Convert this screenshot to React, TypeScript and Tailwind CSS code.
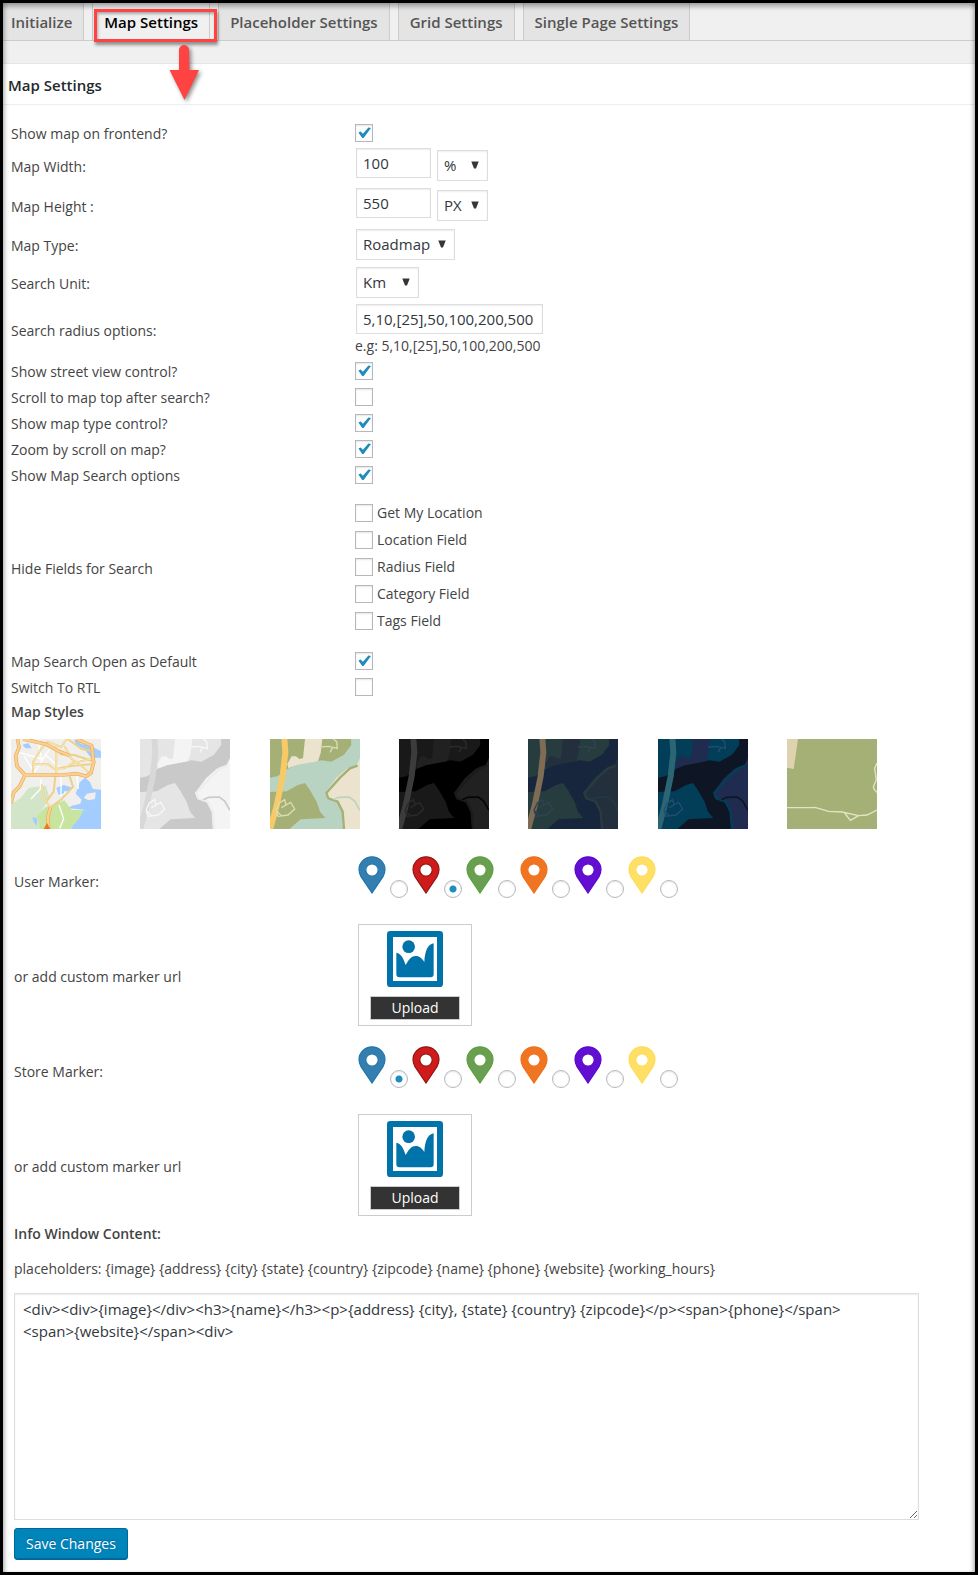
import type { ReactNode } from "react";

type Option = { id: string; label: string; checked?: boolean };

const toggles: Option[] = [
  { id: "street-view", label: "Show street view control?", checked: true },
  { id: "scroll-top", label: "Scroll to map top after search?" },
  { id: "type-control", label: "Show map type control?", checked: true },
  { id: "zoom-scroll", label: "Zoom by scroll on map?", checked: true },
  { id: "search-options", label: "Show Map Search options", checked: true },
];

const hiddenFields: Option[] = [
  { id: "hide-location", label: "Get My Location" },
  { id: "hide-address", label: "Location Field" },
  { id: "hide-radius", label: "Radius Field" },
  { id: "hide-category", label: "Category Field" },
  { id: "hide-tags", label: "Tags Field" },
];

const displayToggles: Option[] = [
  { id: "search-open", label: "Map Search Open as Default", checked: true },
  { id: "rtl", label: "Switch To RTL" },
];

const markers = [
  { name: "Blue", fill: "#347fb0", edge: "#1f77ad" },
  { name: "Red", fill: "#cf1b1b", edge: "#941414" },
  { name: "Green", fill: "#6a9f53", edge: "#5ba23c" },
  { name: "Orange", fill: "#f07522", edge: "#f0701a" },
  { name: "Purple", fill: "#620fd2", edge: "#5a08cf" },
  { name: "Yellow", fill: "#ffe067", edge: "#ffdc55" },
];

const infoTemplate =
  "<div><div>{image}</div><h3>{name}</h3><p>{address} {city}, {state} {country} {zipcode}</p><span>{phone}</span>\n<span>{website}</span><div>";

function Checkbox({ id, checked }: { id: string; checked?: boolean }) {
  return (
    <span className="relative block size-[18px] shrink-0">
      <input
        id={id}
        type="checkbox"
        defaultChecked={checked}
        className="peer block size-[18px] appearance-none border border-[#b4b9be] bg-white shadow-[inset_0_1px_2px_rgba(0,0,0,0.1)]"
      />
      <svg
        viewBox="0 0 18 18"
        className="pointer-events-none absolute inset-0 hidden size-[18px] peer-checked:block"
        aria-hidden="true"
      >
        <path d="M3.4 8.6 5.8 7.4 7.9 9.8 13.4 3.4 16 4 8.6 14 7.2 14Z" fill="#1e8cbe" />
      </svg>
    </span>
  );
}

type RowProps = { label: string; htmlFor?: string; className: string; cell?: string; children: ReactNode };

function Row({ label, htmlFor, className, cell = "pb-0.5", children }: RowProps) {
  return (
    <div className={`grid grid-cols-[344px_1fr] items-center ${className}`}>
      {htmlFor ? <label htmlFor={htmlFor}>{label}</label> : <span>{label}</span>}
      <div className={cell}>{children}</div>
    </div>
  );
}

function Select({ id, label, options, className }: { id: string; label: string; options: string[]; className: string }) {
  return (
    <span className={`relative block h-[31px] ${className}`}>
      <select
        id={id}
        aria-label={label}
        className="block h-full w-full appearance-none border border-[#ddd] bg-white pr-5 pl-1.5 text-[15px] text-[#32373c] shadow-[inset_0_1px_2px_rgba(0,0,0,0.07)]"
      >
        {options.map((option) => (
          <option key={option}>{option}</option>
        ))}
      </select>
      <svg viewBox="0 0 8 8" className="pointer-events-none absolute top-[11px] right-[9px] size-2" aria-hidden="true">
        <path d="M0.3 0.5H7.7L5 7.5H3Z" fill="#32373c" />
      </svg>
    </span>
  );
}

const textInput =
  "block h-[30px] border border-[#ddd] bg-white px-1.5 text-[15px] text-[#32373c] shadow-[inset_0_1px_2px_rgba(0,0,0,0.07)]";

type Palette = { water: string; land: string; light: string; road: string; edge: string; trail: string; stream: string };

const riverStyles: { name: string; palette: Palette }[] = [
  { name: "Silver", palette: { water: "#c9c9c9", land: "#e5e5e5", light: "#f4f4f4", road: "#d8d8d8", edge: "#eeeeee", trail: "#f7f7f7", stream: "#c9c9c9" } },
  { name: "Retro", palette: { water: "#b9d3c2", land: "#a5b076", light: "#ebe3cd", road: "#f8c967", edge: "#a5b076", trail: "#dcdcae", stream: "#b9d3c2" } },
  { name: "Dark", palette: { water: "#000000", land: "#191919", light: "#212121", road: "#3c3c3c", edge: "#1b1b1b", trail: "#2b2b2b", stream: "#050505" } },
  { name: "Night", palette: { water: "#17263c", land: "#263c3f", light: "#242f3e", road: "#7f6c54", edge: "#263c3f", trail: "#2f4450", stream: "#213a42" } },
  { name: "Aubergine", palette: { water: "#0e1626", land: "#023e58", light: "#1f2c50", road: "#2c6675", edge: "#023e58", trail: "#234d72", stream: "#0e1626" } },
];

function RiverMap({ palette }: { palette: Palette }) {
  return (
    <svg viewBox="0 0 270 270" className="block size-[90px]" aria-hidden="true">
      <rect width="270" height="270" fill={palette.water} />
      <path d="M0 0H243L244 18 222 47 184 68 155 64 82 78 52 90 22 112 0 116Z" fill={palette.land} />
      <path d="M105 0H157L152 42 144 67 82 78 55 88 52 75 65 52 78 52 88 60 99 58Z" fill={palette.light} />
      <path d="M0 159 50 157 84 138 105 132 120 154 140 188 150 218 166 237 92 241 58 270H0Z" fill={palette.land} />
      <path d="M270 56 258 82 230 89 198 118 165 162 172 178 203 190 216 216 219 270H270Z" fill={palette.light} />
      <path d="M263 80 240 88 210 116 169 162 175 178 203 188 218 218 222 270" fill="none" stroke={palette.edge} strokeWidth="7" />
      <path d="M190 182 206 175 238 174 254 186 270 214" fill="none" stroke={palette.stream} strokeWidth="5" />
      <path d="M43 -4 46 40 38 112 20 200 0 272" fill="none" stroke={palette.road} strokeWidth="18" />
      <g fill="none" stroke={palette.trail} strokeWidth="4">
        <path d="M18 214 28 192 44 182 48 198 34 206M48 198 62 190 74 210 54 228 24 232 18 214 34 230" />
        <path d="M150 24 176 22 202 28 200 8 190 0M188 26 180 40" />
      </g>
    </svg>
  );
}

function CityMap() {
  return (
    <svg viewBox="0 0 270 270" className="block size-[90px]" aria-hidden="true">
      <rect width="270" height="270" fill="#f0efec" />
      <path d="M0 196 28 178 54 146 104 140 116 176 88 222 102 270H0Z" fill="#d2e5c9" />
      <path d="M78 232 104 204 132 196 160 184 182 212 218 214 214 240 176 270H88Z" fill="#c8e5a0" />
      <path d="M270 152 246 150 236 128 222 116 206 130 194 164 212 182 208 194 182 200 174 208 218 212 206 236 178 270H270Z" fill="#a3ccff" />
      <path d="M136 146 158 138 184 146 176 158 160 156 158 172 142 166Z" fill="#a3ccff" />
      <path d="M188 0 210 14 240 22 270 36V56H240L220 30 196 18Z" fill="#a3ccff" />
      <path d="M34 18 52 12 62 28 44 28ZM64 234 78 238 78 262 68 248Z" fill="#a3ccff" />
      <path d="M218 176 228 164 254 160 252 180 232 184Z" fill="#f0efec" />
      <g fill="none" stroke="#ffffff" strokeWidth="4">
        <path d="M24 40 92 60 80 0M40 52 70 100 116 30M90 120 88 150 60 180M150 108 150 170 186 150M196 96 202 150M144 198 158 240 146 268M100 44 150 90 214 60" />
      </g>
      <g fill="none" stroke="#edd08a" strokeWidth="6">
        <path d="M66 104V70L90 30 110 8 150 24 168 0M66 76H112L130 90 160 88 186 72 240 60M136 20V104M92 136 100 178 118 206M160 20 182 60 218 86 236 104M134 104 128 158 106 188M176 112 186 144 150 182 118 206M146 46 190 48 244 66M134 90 184 80 240 76M170 0 212 30 244 36" />
      </g>
      <g fill="none" stroke="#fff0b8" strokeWidth="2">
        <path d="M66 104V70L90 30 110 8 150 24 168 0M66 76H112L130 90 160 88 186 72 240 60M136 20V104M92 136 100 178 118 206M160 20 182 60 218 86 236 104" />
      </g>
      <g fill="none" strokeLinejoin="round">
        <path d="M20 0 24 26 14 50 18 82 42 108 26 142 8 160 0 194M42 108 154 108 198 104 226 112 240 102 248 70 242 20 196 0M36 0 106 16 142 36 176 50M118 206 110 236 114 270" stroke="#e9ac5e" strokeWidth="11" />
        <path d="M20 0 24 26 14 50 18 82 42 108 26 142 8 160 0 194M42 108 154 108 198 104 226 112 240 102 248 70 242 20 196 0M36 0 106 16 142 36 176 50M118 206 110 236 114 270" stroke="#fbd08f" strokeWidth="7" />
      </g>
      <path d="M98 270 108 252 118 270Z" fill="#ed7620" />
    </svg>
  );
}

function ParkMap() {
  return (
    <svg viewBox="0 0 270 270" className="block size-[90px]" aria-hidden="true">
      <rect width="270" height="270" fill="#a5b076" />
      <path d="M0 0H33L20 90 0 86Z" fill="#dfd2ae" />
      <path
        d="M0 206H72L84 205 125 217 165 219 215 230 240 228 270 213M173 222 190 244 215 230M270 72 263 88 268 122 259 144 262 152 272 162"
        fill="none"
        stroke="#e4e4c4"
        strokeWidth="4"
      />
    </svg>
  );
}

function Pin({ fill, edge }: { fill: string; edge: string }) {
  return (
    <svg viewBox="0 0 28 38" className="block h-[38px] w-7 shrink-0" aria-hidden="true">
      <path
        fillRule="evenodd"
        d="M14 0.8C6.7 0.8 1 6.6 1 13.6 1 16.6 1.9 18.7 3 20.7L14 37 25 20.7C26.1 18.7 27 16.6 27 13.6 27 6.6 21.3 0.8 14 0.8ZM14 7.8A6.2 6.2 0 1 1 14 20.2 6.2 6.2 0 1 1 14 7.8Z"
        fill={fill}
        stroke={edge}
        strokeWidth="1.2"
      />
    </svg>
  );
}

function MarkerPicker({ name, selected }: { name: string; selected: number }) {
  return (
    <div className="flex gap-1" role="radiogroup" aria-label={name}>
      {markers.map((marker, index) => (
        <label key={marker.name} className="flex h-[42px] w-[50px] justify-between">
          <Pin fill={marker.fill} edge={marker.edge} />
          <input
            type="radio"
            name={name}
            aria-label={marker.name}
            defaultChecked={index === selected}
            className="mt-6 block size-[18px] appearance-none rounded-full border border-[#b4b9be] bg-white shadow-[inset_0_1px_2px_rgba(0,0,0,0.1)] checked:bg-[radial-gradient(circle,#1e8cbe_3px,transparent_4px)]"
          />
        </label>
      ))}
    </div>
  );
}

function UploadBox({ name }: { name: string }) {
  return (
    <div className="flex h-[102px] w-[114px] flex-col items-center justify-between border border-[#ccc] px-3 pt-1.5 pb-[5px]">
      <svg viewBox="0 0 168 168" className="block size-14" aria-hidden="true">
        <path
          fillRule="evenodd"
          d="M10 0H158Q168 0 168 10V158Q168 168 158 168H10Q0 168 0 158V10Q0 0 10 0ZM18 18V150H150V18Z"
          fill="#0073aa"
        />
        <circle cx="65" cy="47" r="19" fill="#0073aa" />
        <path
          d="M28 65C42 68 49 80 56 102C66 84 74 75 86 75S106 83 112 93C114 60 122 40 140 37V130Q140 139 131 139H37Q28 139 28 130Z"
          fill="#0073aa"
        />
      </svg>
      <button type="button" aria-label={`Upload ${name}`} className="h-6 w-[90px] border border-[#ccc] bg-[#333] leading-5 text-white">
        Upload
      </button>
    </div>
  );
}

const tab = "flex items-center border-[#ccc] bg-[#e4e4e4] px-[11px] text-[#555]";

export default function App() {
  return (
    <div className="relative min-h-screen border-[3px] border-black bg-white font-['Open_Sans','Noto_Sans',sans-serif] text-sm leading-5 text-[#444]">
      <div className="pointer-events-none absolute inset-0 z-10 shadow-[inset_0_5px_4px_-1px_rgba(0,0,0,0.28),inset_4px_0_4px_-2px_rgba(0,0,0,0.22),inset_-4px_0_4px_-2px_rgba(0,0,0,0.22)]" />

      <div className="border-b border-[#e5e5e5] bg-[#f0f0f0] pb-[22px]">
        <nav className="flex h-[38px] gap-2 border-b border-[#ccc] text-[15px] font-semibold">
          <a href="#initialize" className={`${tab} border-r pl-2`}>Initialize</a>
          <a href="#map-settings" className="relative flex items-center border-x border-[#ccc] bg-[#f0f0f0] px-[11px] text-black">
            Map Settings
            <span className="absolute top-1.5 -right-2 left-px z-20 h-[33px] border-[3px] border-[#ff4343] shadow-[1px_3px_3px_rgba(0,0,0,0.4),inset_1px_2px_3px_rgba(0,0,0,0.3)]" />
            <svg
              viewBox="0 0 32 58"
              className="absolute top-[41px] left-[75px] z-20 h-[58px] w-8 drop-shadow-[2px_2px_2px_rgba(0,0,0,0.45)]"
              aria-hidden="true"
            >
              <path d="M11 6A5 5 0 0 1 21 6L21.500 26H31L16.500 56 1.500 26H11Z" fill="#ff4343" />
            </svg>
          </a>
          <a href="#placeholder" className={`${tab} border-x`}>Placeholder Settings</a>
          <a href="#grid" className={`${tab} border-x`}>Grid Settings</a>
          <a href="#single" className={`${tab} border-x`}>Single Page Settings</a>
        </nav>
      </div>

      <h2 className="border-b border-[#eee] px-[5px] pt-[11px] pb-[9px] text-[15px] font-semibold text-[#23282d]">Map Settings</h2>

      <form className="px-2 pt-4" onSubmit={(event) => event.preventDefault()}>
        <Row label="Show map on frontend?" htmlFor="show-map" className="h-[26px]">
          <Checkbox id="show-map" checked />
        </Row>
        <Row label="Map Width:" htmlFor="map-width" className="h-10" cell="flex items-start gap-1.5 pb-1.5 pl-px">
          <input id="map-width" type="text" defaultValue="100" className={`${textInput} w-[75px]`} />
          <Select id="width-unit" label="Width unit" options={["%", "PX"]} className="mt-0.5 w-[51px]" />
        </Row>
        <Row label="Map Height :" htmlFor="map-height" className="h-10" cell="flex items-start gap-1.5 pb-1.5 pl-px">
          <input id="map-height" type="text" defaultValue="550" className={`${textInput} w-[75px]`} />
          <Select id="height-unit" label="Height unit" options={["PX", "%"]} className="mt-0.5 w-[51px]" />
        </Row>
        <Row label="Map Type:" htmlFor="map-type" className="h-[38px]" cell="pb-1 pl-px">
          <Select id="map-type" label="Map type" options={["Roadmap", "Satellite", "Hybrid", "Terrain"]} className="w-[99px]" />
        </Row>
        <Row label="Search Unit:" htmlFor="search-unit" className="h-[38px]" cell="pb-1 pl-px">
          <Select id="search-unit" label="Search unit" options={["Km", "Mile"]} className="w-[63px]" />
        </Row>
        <Row label="Search radius options:" htmlFor="radius" className="h-14">
          <input id="radius" type="text" defaultValue="5,10,[25],50,100,200,500" className={`${textInput} ml-px w-[187px]`} />
          <p className="mt-0.5">e.g: 5,10,[25],50,100,200,500</p>
        </Row>
        {toggles.map((option) => (
          <Row key={option.id} label={option.label} htmlFor={option.id} className="h-[26px]">
            <Checkbox id={option.id} checked={option.checked} />
          </Row>
        ))}
        <Row label="Hide Fields for Search" className="h-40" cell="flex flex-col gap-[7px] pb-1">
          {hiddenFields.map((option) => (
            <div key={option.id} className="flex items-center gap-1">
              <Checkbox id={option.id} />
              <label htmlFor={option.id}>{option.label}</label>
            </div>
          ))}
        </Row>
        {displayToggles.map((option) => (
          <Row key={option.id} label={option.label} htmlFor={option.id} className="h-[26px]">
            <Checkbox id={option.id} checked={option.checked} />
          </Row>
        ))}

        <h3 className="pt-px font-semibold">Map Styles</h3>
        <div className="mt-[17px] flex max-w-[866px] justify-between">
          <button type="button" aria-label="Standard"><CityMap /></button>
          {riverStyles.map((style) => (
            <button key={style.name} type="button" aria-label={style.name}><RiverMap palette={style.palette} /></button>
          ))}
          <button type="button" aria-label="Park"><ParkMap /></button>
        </div>

        <div className="pt-[27px] pl-[3px]">
          <Row label="User Marker:" className="h-[52px]" cell="pb-2.5">
            <MarkerPicker name="User Marker" selected={1} />
          </Row>
          <Row label="or add custom marker url" className="h-[138px]" cell="pb-1">
            <UploadBox name="user marker" />
          </Row>
          <Row label="Store Marker:" className="h-[52px]" cell="pb-2.5">
            <MarkerPicker name="Store Marker" selected={0} />
          </Row>
          <Row label="or add custom marker url" className="h-[138px]" cell="pb-1">
            <UploadBox name="store marker" />
          </Row>
          <label htmlFor="info-window" className="-mt-3 block font-semibold">Info Window Content:</label>
          <p className="mt-[15px]">
            placeholders: {"{image} {address} {city} {state} {country} {zipcode} {name} {phone} {website} {working_hours}"}
          </p>
          <textarea
            id="info-window"
            spellCheck={false}
            className="mt-3.5 block h-[227px] w-[calc(100%-48px)] border border-[#ddd] px-2 py-1 text-[15px] leading-[22px] text-[#32373c] shadow-[inset_0_1px_2px_rgba(0,0,0,0.07)]"
            defaultValue={infoTemplate}
          />
          <button
            type="submit"
            className="mt-2 block h-8 rounded-[3px] border border-[#006799] bg-[#0085ba] px-[11px] text-white shadow-[inset_0_-1px_0_#006799] [text-shadow:0_-1px_1px_#006799]"
          >
            Save Changes
          </button>
        </div>
      </form>
    </div>
  );
}
